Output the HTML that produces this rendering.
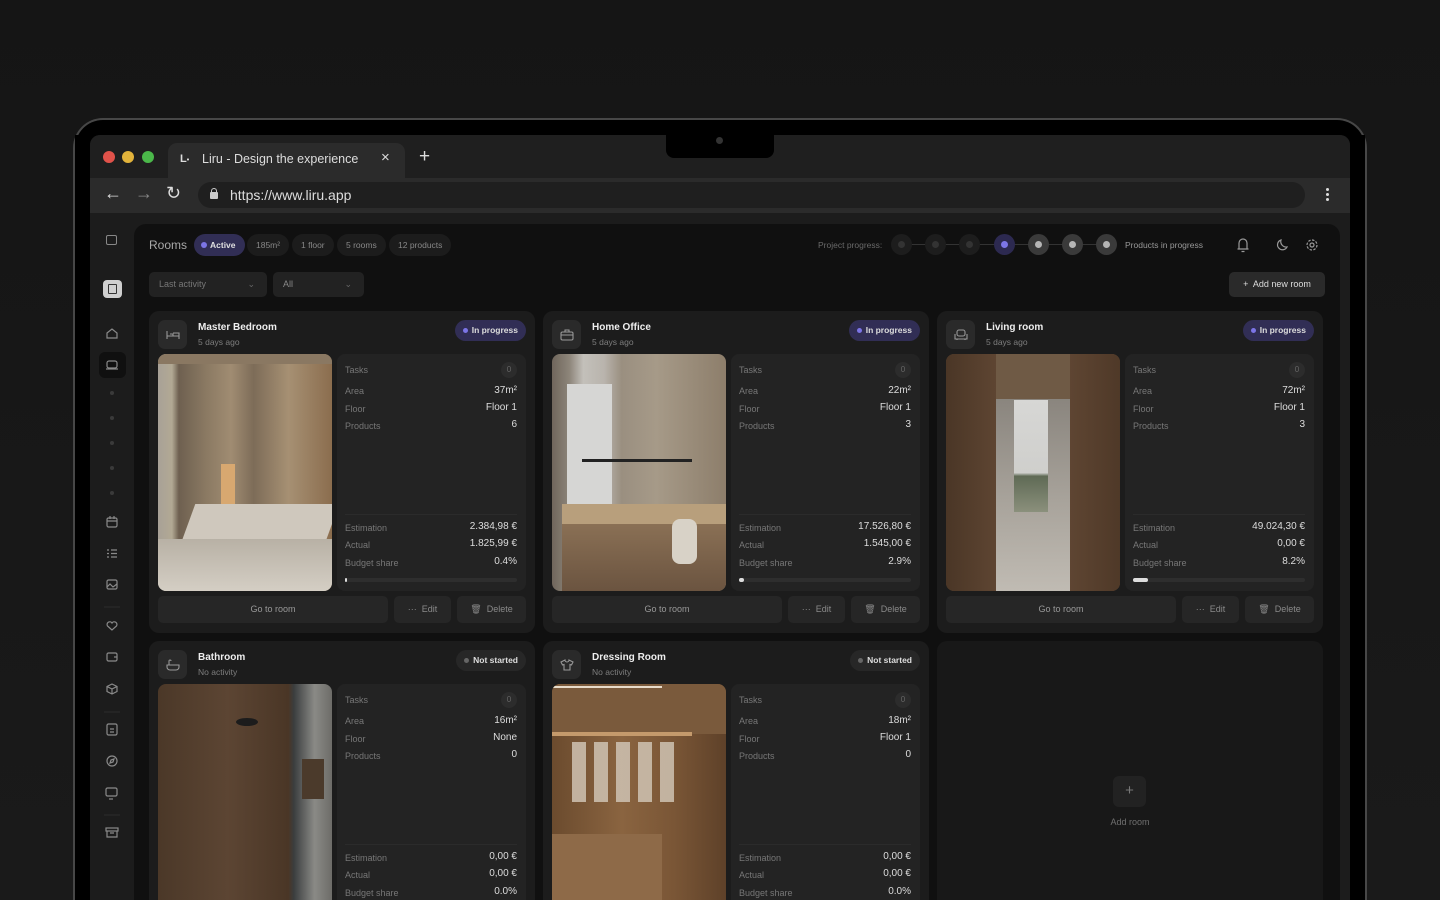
<!DOCTYPE html>
<html><head><meta charset="utf-8"><style>
*{box-sizing:border-box;margin:0;padding:0}
html,body{width:1440px;height:900px;overflow:hidden}
body{background:#151515;font-family:"Liberation Sans",sans-serif}
#w{position:relative;width:1440px;height:900px;overflow:hidden;background:linear-gradient(180deg,#151515,#1a1a1a)}
.a{position:absolute}
.laptop{left:73px;top:118px;width:1294px;height:782px;border:2px solid #474747;border-bottom:none;border-radius:30px 30px 0 0;background:#000}
.screen{left:90px;top:135px;width:1260px;height:765px;background:#1c1c1c;border-radius:10px 10px 0 0;overflow:hidden}
.card{position:absolute;width:386px;height:322px;background:#1c1c1c;border-radius:10px;overflow:hidden}
.short{height:259px;border-radius:10px 10px 0 0}
.ib{position:absolute;left:9px;top:9px;width:29px;height:29px;background:#2a2a2a;border-radius:7px;display:flex;align-items:center;justify-content:center}
.tt{position:absolute;left:49px;top:11px;font-size:10px;font-weight:bold;color:#eee}
.st{position:absolute;left:49px;top:26px;font-size:8.5px;color:#7e7e7e}
.pill{position:absolute;right:9px;top:9px;height:21px;border-radius:11px;padding:0 8px 0 17px;font-size:8.5px;font-weight:bold;color:#ddd;line-height:21px}
.pill:before{content:"";position:absolute;left:8px;top:8px;width:5px;height:5px;border-radius:50%}
.ip{background:#312e55}.ip:before{background:#7c75e6}
.ns{background:#272727}.ns:before{background:#666}
.img{position:absolute;left:9px;top:43px;width:174px;height:237px;border-radius:8px;overflow:hidden}
.sp{position:absolute;left:188px;top:43px;width:189px;height:237px;background:#232323;border-radius:8px;font-size:9px}
.sp .l{position:absolute;left:8px;color:#777}
.sp .v{position:absolute;right:9px;color:#ddd;font-size:10px}
.sp .bd{position:absolute;right:9px;top:8px;width:16px;height:16px;border-radius:50%;background:#2c2c2c;color:#666;font-size:8px;text-align:center;line-height:16px}
.sp .dv{position:absolute;left:8px;right:9px;top:160px;height:1px;background:#2b2b2b}
.sp .bar{position:absolute;left:8px;right:9px;top:224px;height:4px;border-radius:2px;background:#2e2e2e}
.sp .bar i{position:absolute;left:0;top:0;height:4px;border-radius:2px;background:#ddd}
.btn{position:absolute;top:285px;height:27px;background:#262626;border-radius:5px;color:#8a8a8a;font-size:9px;text-align:center;line-height:27px}
.hp{position:absolute;top:234px;height:22px;border-radius:11px;background:#1c1c1c;color:#888;font-size:8.5px;line-height:22px;padding:0 9px}
.pc{position:absolute;top:234px;width:21px;height:21px;border-radius:50%}
.pc i{position:absolute;left:7px;top:7px;width:7px;height:7px;border-radius:50%}
</style></head><body><div id="w">
<div class="a laptop"></div>
<div class="a screen">
 <div class="a" style="left:0;top:0;width:1260px;height:43px;background:#1f1f1f"></div>
 <div class="a" style="left:13px;top:16px;width:12px;height:12px;border-radius:50%;background:#e0524a"></div>
 <div class="a" style="left:32px;top:16px;width:12px;height:12px;border-radius:50%;background:#e2b33b"></div>
 <div class="a" style="left:52px;top:16px;width:12px;height:12px;border-radius:50%;background:#4bb84a"></div>
 <div class="a" style="left:78px;top:8px;width:237px;height:36px;background:#2b2b2b;border-radius:9px 9px 0 0"></div>
 <div class="a" style="left:90px;top:18px;width:13px;height:13px;color:#ddd;font-size:11px;font-weight:bold">L<span style="font-size:7px">•</span></div>
 <div class="a" style="left:112px;top:17px;color:#ddd;font-size:12.5px">Liru - Design the experience</div>
 <div class="a" style="left:291px;top:14px;color:#ddd;font-size:15px">×</div>
 <div class="a" style="left:329px;top:11px;color:#ddd;font-size:19px">+</div>
 <div class="a" style="left:576px;top:0;width:108px;height:23px;background:#000;border-radius:0 0 8px 8px"></div>
 <div class="a" style="left:626px;top:2px;width:7px;height:7px;border-radius:50%;background:#333"></div>
 <div class="a" style="left:0;top:43px;width:1260px;height:35px;background:#2b2b2b"></div>
 <div class="a" style="left:14px;top:48px;color:#ddd;font-size:18px">←</div>
 <div class="a" style="left:45px;top:48px;color:#888;font-size:18px">→</div>
 <div class="a" style="left:76px;top:48px;color:#ddd;font-size:18px">↻</div>
 <div class="a" style="left:108px;top:47px;width:1107px;height:26px;background:#1f1f1f;border-radius:13px"></div>
 <div class="a" style="left:120px;top:57px;width:8px;height:7px;background:#ccc;border-radius:1px"></div>
 <div class="a" style="left:121px;top:53px;width:6px;height:6px;border:1.5px solid #ccc;border-bottom:none;border-radius:3px 3px 0 0"></div>
 <div class="a" style="left:140px;top:52px;color:#ddd;font-size:14px">https://www.liru.app</div>
 <div class="a" style="left:1236px;top:53px;width:3px;height:3px;background:#ddd;border-radius:50%;box-shadow:0 5px #ddd,0 10px #ddd"></div>
 <div class="a" style="left:0;top:78px;width:1260px;height:687px;background:#1c1c1c"></div>
 <div class="a" style="left:44px;top:89px;width:1206px;height:676px;background:#101010;border-radius:12px 12px 0 0"></div>
</div>
<div class="a" style="left:106px;top:235px;width:11px;height:10px;border:1.3px solid #888;border-radius:2px"></div>
<div class="a" style="left:103px;top:280px;width:19px;height:18px;background:#cfcfcf;border-radius:4px"></div>
<div class="a" style="left:108px;top:284px;width:9px;height:10px;border:1.5px solid #333;border-radius:1px"></div>
<div class="a" style="left:99px;top:352px;width:27px;height:26px;background:#101010;border-radius:6px"></div>
<svg class="a" style="left:0;top:0" width="140" height="900" fill="none" stroke="#8a8a8a" stroke-width="1.2">
<path d="M107 333l5-4 5 4v5h-10z"/>
<rect x="107" y="361" width="10" height="7" rx="2"/><path d="M106 369h12"/>
<g fill="#3a3a3a" stroke="none"><circle cx="112" cy="393" r="2"/><circle cx="112" cy="418" r="2"/><circle cx="112" cy="443" r="2"/><circle cx="112" cy="468" r="2"/><circle cx="112" cy="493" r="2"/></g>
<rect x="107" y="518" width="10" height="9" rx="1.5"/><path d="M107 521h10M110 516v3M114 516v3"/>
<path d="M111 550h6M111 553.5h6M111 557h6M107 550h2M107 553.5h2M107 557h2"/>
<rect x="107" y="580" width="10" height="9" rx="1.5"/><path d="M107 587l3-3 3 3 4-3"/>
<path d="M120 607h-16" stroke="#2a2a2a"/>
<path d="M112 630l-4.5-4a2.6 2.6 0 014.5-3 2.6 2.6 0 014.5 3z"/>
<rect x="107" y="653" width="10" height="8" rx="1.5"/><path d="M114 657h3"/>
<path d="M112 684l5 2.5v5l-5 2.5-5-2.5v-5zM107 686.5l5 2.5 5-2.5M112 689v5"/>
<path d="M120 712h-16" stroke="#2a2a2a"/>
<rect x="107" y="724" width="10" height="11" rx="1.5"/><path d="M110 729h4M110 732h4"/>
<circle cx="112" cy="761" r="5"/><path d="M110 763l1-3 3-1-1 3z"/>
<rect x="106" y="788" width="11" height="8" rx="1.5"/><path d="M109 799h4"/>
<path d="M120 815h-16" stroke="#2a2a2a"/>
<rect x="106" y="828" width="12" height="3"/><path d="M107 831v6h10v-6M110 833h4"/>
</svg>
<div class="a" style="left:149px;top:238px;color:#a8a8a8;font-size:12px">Rooms</div>
<div class="hp" style="left:194px;background:#312e55;color:#e0e0e0;font-weight:bold;padding-left:16px">Active<span class="a" style="left:7px;top:8px;width:6px;height:6px;border-radius:50%;background:#7c75e6"></span></div>
<div class="hp" style="left:247px">185m²</div>
<div class="hp" style="left:292px">1 floor</div>
<div class="hp" style="left:337px">5 rooms</div>
<div class="hp" style="left:389px">12 products</div>
<div class="a" style="left:149px;top:272px;width:118px;height:25px;background:#222;border-radius:5px;color:#777;font-size:9px;line-height:25px;padding-left:10px">Last activity<span class="a" style="right:12px;top:0;color:#666">⌄</span></div>
<div class="a" style="left:273px;top:272px;width:91px;height:25px;background:#222;border-radius:5px;color:#888;font-size:9px;line-height:25px;padding-left:10px">All<span class="a" style="right:12px;top:0;color:#666">⌄</span></div>
<div class="a" style="left:818px;top:240px;color:#6a6a6a;font-size:8.5px">Project progress:</div>
<div class="a" style="left:902px;top:244px;width:205px;height:1px;background:#333"></div>
<div class="pc" style="left:891px;background:#1d1d1d"><i style="background:#333"></i></div>
<div class="pc" style="left:925px;background:#1d1d1d"><i style="background:#333"></i></div>
<div class="pc" style="left:959px;background:#1d1d1d"><i style="background:#333"></i></div>
<div class="pc" style="left:994px;background:#2c2950"><i style="background:#7c75e6"></i></div>
<div class="pc" style="left:1028px;background:#3a3a3a"><i style="background:#b5b5b5"></i></div>
<div class="pc" style="left:1062px;background:#3a3a3a"><i style="background:#b5b5b5"></i></div>
<div class="pc" style="left:1096px;background:#3a3a3a"><i style="background:#b5b5b5"></i></div>
<div class="a" style="left:1125px;top:240px;color:#999;font-size:8.5px">Products in progress</div>
<svg class="a" style="left:1230px;top:232px" width="95" height="26" fill="none" stroke="#999" stroke-width="1.2">
<path d="M9 17V11a4 4 0 018 0v6h1.5H7.5zM11.5 19.5h3"/>
<path d="M51 8a5 5 0 106 7 5.5 5.5 0 01-6-7z"/>
<circle cx="82" cy="13" r="2"/><circle cx="82" cy="13" r="5" stroke-dasharray="2.5 1.4"/>
</svg>
<div class="a" style="left:1229px;top:272px;width:96px;height:25px;background:#2a2a2a;border-radius:5px;color:#ddd;font-size:9px;line-height:25px;text-align:center">+&nbsp; Add new room</div>

<div class="card" style="left:149px;top:311px">
 <div class="ib"><svg width="14" height="10" fill="none" stroke="#999" stroke-width="1.1"><path d="M1 1v8M1 6h12v3M4 4h3v2M7 3h6v3"/></svg></div>
 <div class="tt">Master Bedroom</div><div class="st">5 days ago</div>
 <div class="pill ip">In progress</div>
 <div class="img" style="background:linear-gradient(90deg,#a8a197 0,#b2a994 8%,#6e6050 12%,#8b7a63 28%,#a08c72 42%,#7d6c58 55%,#a69073 75%,#8b6d4e 100%)">
  <div class="a" style="left:0;top:0;width:174px;height:10px;background:#8a7862"></div>
  <div class="a" style="left:63px;top:110px;width:14px;height:55px;background:#d8a870"></div>
  <div class="a" style="left:30px;top:150px;width:144px;height:40px;background:#cfc8bd;transform:skewX(-20deg)"></div>
  <div class="a" style="left:0;top:185px;width:174px;height:52px;background:linear-gradient(#b8b1a5,#d4cec4)"></div>
 </div>
 <div class="sp"><div class="l" style="top:11px">Tasks</div><div class="bd">0</div>
  <div class="l" style="top:32px">Area</div><div class="v" style="top:31px">37m²</div>
  <div class="l" style="top:50px">Floor</div><div class="v" style="top:48px">Floor 1</div>
  <div class="l" style="top:67px">Products</div><div class="v" style="top:65px">6</div>
  <div class="dv"></div>
  <div class="l" style="top:169px">Estimation</div><div class="v" style="top:167px">2.384,98 €</div>
  <div class="l" style="top:186px">Actual</div><div class="v" style="top:184px">1.825,99 €</div>
  <div class="l" style="top:204px">Budget share</div><div class="v" style="top:202px">0.4%</div>
  <div class="bar"><i style="width:2px"></i></div></div>
 <div class="btn" style="left:9px;width:230px;color:#999">Go to room</div>
 <div class="btn" style="left:245px;width:57px">··· &nbsp;Edit</div>
 <div class="btn" style="left:308px;width:69px">🗑 &nbsp;Delete</div>
</div>

<div class="card" style="left:543px;top:311px">
 <div class="ib"><svg width="14" height="12" fill="none" stroke="#999" stroke-width="1.1"><rect x="1" y="3" width="12" height="8" rx="1.5"/><path d="M5 3V1h4v2M1 6h12"/></svg></div>
 <div class="tt">Home Office</div><div class="st">5 days ago</div>
 <div class="pill ip">In progress</div>
 <div class="img" style="background:linear-gradient(90deg,#6f665b 0,#8d857a 10%,#c3c0ba 18%,#b9b4ad 30%,#9a8f80 40%,#a69a88 60%,#8d7e6b 100%)">
  <div class="a" style="left:15px;top:30px;width:45px;height:130px;background:#d6d6d4"></div>
  <div class="a" style="left:30px;top:105px;width:110px;height:3px;background:#222"></div>
  <div class="a" style="left:10px;top:150px;width:164px;height:20px;background:#b89f7c"></div>
  <div class="a" style="left:10px;top:170px;width:164px;height:67px;background:linear-gradient(#8a7055,#6b5440)"></div>
  <div class="a" style="left:120px;top:165px;width:25px;height:45px;background:#d8d2c7;border-radius:8px"></div>
 </div>
 <div class="sp"><div class="l" style="top:11px">Tasks</div><div class="bd">0</div>
  <div class="l" style="top:32px">Area</div><div class="v" style="top:31px">22m²</div>
  <div class="l" style="top:50px">Floor</div><div class="v" style="top:48px">Floor 1</div>
  <div class="l" style="top:67px">Products</div><div class="v" style="top:65px">3</div>
  <div class="dv"></div>
  <div class="l" style="top:169px">Estimation</div><div class="v" style="top:167px">17.526,80 €</div>
  <div class="l" style="top:186px">Actual</div><div class="v" style="top:184px">1.545,00 €</div>
  <div class="l" style="top:204px">Budget share</div><div class="v" style="top:202px">2.9%</div>
  <div class="bar"><i style="width:5px"></i></div></div>
 <div class="btn" style="left:9px;width:230px;color:#999">Go to room</div>
 <div class="btn" style="left:245px;width:57px">··· &nbsp;Edit</div>
 <div class="btn" style="left:308px;width:69px">🗑 &nbsp;Delete</div>
</div>

<div class="card" style="left:937px;top:311px">
 <div class="ib"><svg width="14" height="12" fill="none" stroke="#999" stroke-width="1.1"><rect x="3" y="1" width="8" height="6" rx="2"/><path d="M1 5v5h12V5M3 10v1M11 10v1"/></svg></div>
 <div class="tt">Living room</div><div class="st">5 days ago</div>
 <div class="pill ip">In progress</div>
 <div class="img" style="background:#5a4330">
  <div class="a" style="left:49px;top:0;width:75px;height:45px;background:#6f5a45"></div>
  <div class="a" style="left:49px;top:45px;width:75px;height:192px;background:linear-gradient(#8a857e,#a9a49c 55%,#c0bbb3)"></div>
  <div class="a" style="left:68px;top:46px;width:34px;height:112px;background:linear-gradient(#d7d7d5 0,#cfcfcc 65%,#5f6a55 68%,#8b907c 100%)"></div>
  <div class="a" style="left:0;top:0;width:50px;height:237px;background:linear-gradient(90deg,#4a3626,#5e4532)"></div>
  <div class="a" style="left:124px;top:0;width:50px;height:237px;background:linear-gradient(90deg,#5e4532,#4f3928)"></div>
 </div>
 <div class="sp"><div class="l" style="top:11px">Tasks</div><div class="bd">0</div>
  <div class="l" style="top:32px">Area</div><div class="v" style="top:31px">72m²</div>
  <div class="l" style="top:50px">Floor</div><div class="v" style="top:48px">Floor 1</div>
  <div class="l" style="top:67px">Products</div><div class="v" style="top:65px">3</div>
  <div class="dv"></div>
  <div class="l" style="top:169px">Estimation</div><div class="v" style="top:167px">49.024,30 €</div>
  <div class="l" style="top:186px">Actual</div><div class="v" style="top:184px">0,00 €</div>
  <div class="l" style="top:204px">Budget share</div><div class="v" style="top:202px">8.2%</div>
  <div class="bar"><i style="width:15px"></i></div></div>
 <div class="btn" style="left:9px;width:230px;color:#999">Go to room</div>
 <div class="btn" style="left:245px;width:57px">··· &nbsp;Edit</div>
 <div class="btn" style="left:308px;width:69px">🗑 &nbsp;Delete</div>
</div>

<div class="card short" style="left:149px;top:641px">
 <div class="ib"><svg width="14" height="12" fill="none" stroke="#999" stroke-width="1.1"><path d="M1 6h12v2a3 3 0 01-3 3H4a3 3 0 01-3-3zM3 6V2a1 1 0 012 0"/></svg></div>
 <div class="tt">Bathroom</div><div class="st">No activity</div>
 <div class="pill ns">Not started</div>
 <div class="img" style="background:linear-gradient(90deg,#4b3828,#5c4533 40%,#4a3626 75%,#3a3d3e 78%,#8a8a86 90%,#6d6c68)">
  <div class="a" style="left:78px;top:34px;width:22px;height:8px;border-radius:50%;background:#1c1c1c"></div>
  <div class="a" style="left:144px;top:75px;width:22px;height:40px;background:#4b3a2b"></div>
 </div>
 <div class="sp"><div class="l" style="top:11px">Tasks</div><div class="bd">0</div>
  <div class="l" style="top:32px">Area</div><div class="v" style="top:31px">16m²</div>
  <div class="l" style="top:50px">Floor</div><div class="v" style="top:48px">None</div>
  <div class="l" style="top:67px">Products</div><div class="v" style="top:65px">0</div>
  <div class="dv"></div>
  <div class="l" style="top:169px">Estimation</div><div class="v" style="top:167px">0,00 €</div>
  <div class="l" style="top:186px">Actual</div><div class="v" style="top:184px">0,00 €</div>
  <div class="l" style="top:204px">Budget share</div><div class="v" style="top:202px">0.0%</div>
 </div>
</div>

<div class="card short" style="left:543px;top:641px">
 <div class="ib"><svg width="14" height="12" fill="none" stroke="#999" stroke-width="1.1"><path d="M5 1L1 3l1.5 3L4 5.5V11h6V5.5l1.5.5L13 3 9 1a2 2 0 01-4 0z"/></svg></div>
 <div class="tt">Dressing Room</div><div class="st">No activity</div>
 <div class="pill ns">Not started</div>
 <div class="img" style="background:linear-gradient(90deg,#6b4b2e,#8a6440 40%,#7a5636 70%,#5e4129)">
  <div class="a" style="left:0;top:0;width:174px;height:50px;background:#7a5a3c"></div>
  <div class="a" style="left:0;top:2px;width:110px;height:2px;background:#e8dccb"></div>
  <div class="a" style="left:0;top:48px;width:140px;height:4px;background:#c49a6c"></div>
  <div class="a" style="left:20px;top:58px;width:110px;height:60px;background:repeating-linear-gradient(90deg,#cfc3b3 0 14px,transparent 14px 22px);opacity:.85"></div>
  <div class="a" style="left:0;top:150px;width:110px;height:87px;background:#8e6a48"></div>
 </div>
 <div class="sp"><div class="l" style="top:11px">Tasks</div><div class="bd">0</div>
  <div class="l" style="top:32px">Area</div><div class="v" style="top:31px">18m²</div>
  <div class="l" style="top:50px">Floor</div><div class="v" style="top:48px">Floor 1</div>
  <div class="l" style="top:67px">Products</div><div class="v" style="top:65px">0</div>
  <div class="dv"></div>
  <div class="l" style="top:169px">Estimation</div><div class="v" style="top:167px">0,00 €</div>
  <div class="l" style="top:186px">Actual</div><div class="v" style="top:184px">0,00 €</div>
  <div class="l" style="top:204px">Budget share</div><div class="v" style="top:202px">0.0%</div>
 </div>
</div>

<div class="card short" style="left:937px;top:641px;background:#181818">
 <div class="a" style="left:176px;top:135px;width:33px;height:31px;background:#222;border-radius:6px;color:#777;font-size:15px;text-align:center;line-height:30px">+</div>
 <div class="a" style="left:0;width:386px;top:176px;text-align:center;color:#707070;font-size:9px">Add room</div>
</div>
<div class="a" style="left:75px;top:135px;width:15px;height:765px;background:#000"></div>
<div class="a" style="left:1350px;top:135px;width:15px;height:765px;background:#000"></div>
</div></body></html>
